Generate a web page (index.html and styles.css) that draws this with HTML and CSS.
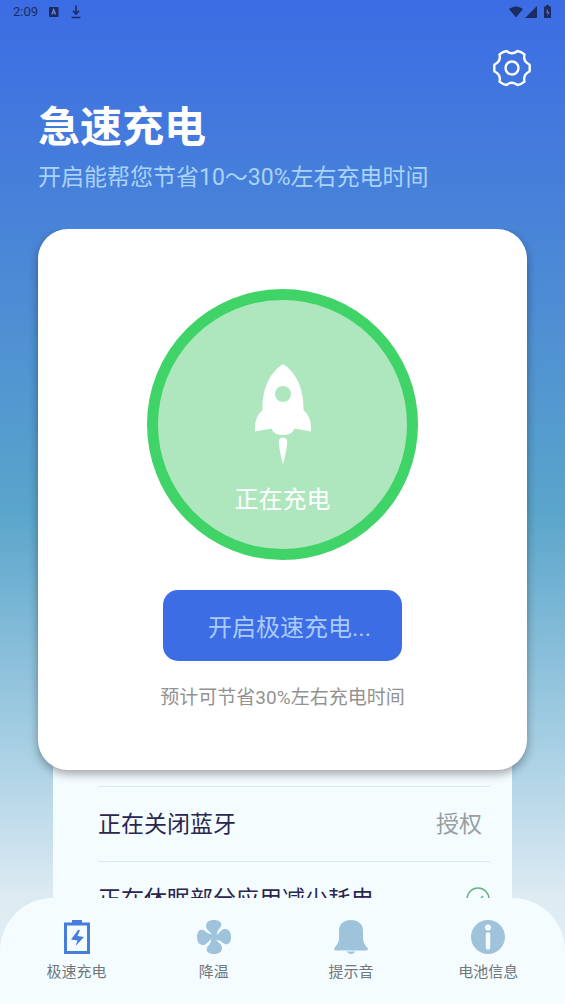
FILE: index.html
```
<!DOCTYPE html>
<html lang="zh-CN">
<head>
<meta charset="utf-8">
<meta name="viewport" content="width=device-width, initial-scale=1">
<title>急速充电</title>
<link rel="stylesheet" href="styles.css">
</head>
<body>
<div class="app">
  <div class="status">
    <div class="status-group">
      <span class="clock">2:09</span>
      <svg class="status-icon" viewBox="0 0 12 14" aria-hidden="true"><rect x="1" y="2" width="9.500" height="10" rx="1" fill="#1b2c62"/><path d="M3.800 9.500 5.700 4.500 7.600 9.500M4.500 8h2.400" fill="none" stroke="#6d88dc" stroke-width="1.200"/></svg>
      <svg class="status-icon" viewBox="0 0 12 14" aria-hidden="true"><path d="M6 .500v8M3 5.800 6 9l3-3.200M1.500 12.500h9" fill="none" stroke="#1b2c62" stroke-width="1.600"/></svg>
    </div>
    <svg class="status-signals" viewBox="0 0 44 14" aria-hidden="true" fill="#1b2c62">
      <path d="M0 4C4.500.500 9.500.500 14 4L7 12.500z"/>
      <path d="M28 1v12H16z"/>
      <path d="M37 1.500V0h3v1.500h2V13h-7V1.500z"/>
      <path d="m39 3.500-2 4h1.500V11l2-4H39z" fill="#5d7bd0"/>
    </svg>
  </div>

  <header class="header">
    <button class="settings" type="button" aria-label="设置">
      <svg viewBox="-19 -19 38 38" fill="none" stroke="#fff" stroke-width="2.400" stroke-linejoin="round" aria-hidden="true">
        <path d="M17.500 3.500C13 5.500 11.300 8.500 12.500 13.600Q9 16.500 5.500 17C1.700 13.800 -1.700 13.800 -5.500 17Q-9 16.500 -12.500 13.600C-11.300 8.500 -13 5.500 -17.500 3.500Q-18 0 -17.500 -3.500C-13 -5.500 -11.300 -8.500 -12.500 -13.600Q-9 -16.500 -5.500 -17C-1.700 -13.800 1.700 -13.800 5.500 -17Q9 -16.500 12.500 -13.600C11.300 -8.500 13 -5.500 17.500 -3.500Q18 0 17.500 3.500Z"/>
        <circle r="6.500"/>
      </svg>
    </button>
    <h1 class="title">急速充电</h1>
    <p class="subtitle">开启能帮您节省10～30%左右充电时间</p>
  </header>

  <main class="content">
    <section class="card">
      <div class="dial">
        <svg class="rocket" viewBox="0 0 58 102" fill="#fff" aria-hidden="true">
          <path fill-rule="evenodd" d="M29 1C18 8 8 23 8.500 47 3 52 .500 58 1 68.500L17.500 65.500C19 70 23 72 29 72S39 70 40.500 65.500L57 68.500C57.500 58 55 52 49.500 47 50 23 40 8 29 1zM29 23a8 8 0 1 1 0 16 8 8 0 0 1 0-16z"/>
          <path d="M29 74.500c3 0 4.500 2 4.200 5C32.500 87 31 94 29 101.500 27 94 25.500 87 24.800 79.500c-.300-3 1.200-5 4.200-5z"/>
        </svg>
        <span class="dial-label">正在充电</span>
      </div>
      <button class="start" type="button">开启极速充电...</button>
      <p class="hint">预计可节省30%左右充电时间</p>
    </section>

    <ul class="tasks">
      <li class="task"><span class="task-name">正在关闭蓝牙</span><button class="grant" type="button">授权</button></li>
      <li class="task"><span class="task-name">正在休眠部分应用减少耗电</span>
        <svg class="done" viewBox="0 0 24 24" fill="none" stroke="#67b07c" stroke-width="1.600" aria-hidden="true"><circle cx="12" cy="12" r="11"/><path d="m7 12 4 4 6-7"/></svg>
      </li>
    </ul>
  </main>

  <nav class="tabs">
    <a class="tab" href="#charge" aria-current="page">
      <svg class="tab-icon" viewBox="0 0 36 36" aria-hidden="true"><path d="M6.500 5h23v28.500h-23z" fill="none" stroke="#477ddb" stroke-width="3"/><path d="M13 1h10v4H13z" fill="#477ddb"/><path d="M19 11 12 20.500l6.500 1-2 5.500L25 18l-6.500-1L21 11z" fill="#477ddb"/></svg>
      <span>极速充电</span>
    </a>
    <a class="tab" href="#cool">
      <svg class="tab-icon" viewBox="-18 -18 36 36" fill="#9fc3db" aria-hidden="true">
        <path id="blade" d="M-1 1C-1 -5 -8 -6 -8 -11 -8 -15.500 -4 -17 0 -17 5 -17 8.500 -14.500 7 -11 6 -8 3 -7 3 -3L1 1z"/>
        <use href="#blade" transform="rotate(90)"/><use href="#blade" transform="rotate(180)"/><use href="#blade" transform="rotate(270)"/>
      </svg>
      <span>降温</span>
    </a>
    <a class="tab" href="#sound">
      <svg class="tab-icon" viewBox="0 0 36 36" fill="#9fc3db" aria-hidden="true"><path d="M18 1C10.500 1 6 5 6 12v7C6 24 3.500 26 1.500 29c-1 1.500 0 2.500 1.500 2.500h30c1.500 0 2.500-1 1.500-2.500C32.500 26 30 24 30 19v-7C30 5 25.500 1 18 1z"/><path d="M13.500 32.500h9C21 34 20 35 18 35s-3-1-4.500-2.500z"/></svg>
      <span>提示音</span>
    </a>
    <a class="tab" href="#battery">
      <svg class="tab-icon" viewBox="0 0 36 36" aria-hidden="true"><circle cx="18" cy="18" r="17" fill="#9fc3db"/><circle cx="18" cy="8.500" r="3" fill="#f4fcff"/><path d="M18 15.500v13" stroke="#f4fcff" stroke-width="4.500" stroke-linecap="round"/></svg>
      <span>电池信息</span>
    </a>
  </nav>
</div>
</body>
</html>
```
FILE: styles.css
```
* {
  box-sizing: border-box;
}

body {
  margin: 0;
  font-family: Roboto, "Noto Sans CJK SC", sans-serif;
}

h1,
p,
ul {
  margin: 0;
  padding: 0;
}

button {
  border: 0;
  padding: 0;
  background: none;
  font: inherit;
  cursor: pointer;
}

.app {
  display: flex;
  flex-direction: column;
  height: 100vh;
  overflow: hidden;
  background: linear-gradient(#3c6ce4 0%, #4781d9 20%, #5aa5cb 51%, #b0d4e6 77%, #dceaf2 89%, #e6f1f7 100%);
}

.status {
  display: flex;
  align-items: center;
  justify-content: space-between;
  height: 23px;
  padding: 0 12px 0 13px;
  color: #1b2c62;
  font-size: 13px;
}

.status-group {
  display: flex;
  align-items: center;
  gap: 10px;
}

.status-icon {
  width: 12px;
  height: 14px;
}

.status-signals {
  width: 44px;
  height: 14px;
}

.header {
  display: flex;
  flex-direction: column;
  padding: 26px 34px 35px 38px;
}

.settings {
  align-self: flex-end;
  width: 38px;
  height: 38px;
}

.settings svg {
  display: block;
}

.title {
  margin-top: 16px;
  color: #fff;
  font-size: 42px;
  font-weight: 700;
  line-height: 50px;
}

.subtitle {
  margin-top: 9px;
  color: #a9d3f8;
  font-size: 23px;
  line-height: 32px;
}

.content {
  flex: 1;
  min-height: 0;
  overflow: hidden;
}

.card {
  position: relative;
  z-index: 1;
  display: flex;
  flex-direction: column;
  align-items: center;
  margin: 0 38px;
  padding: 60px 20px 58px;
  border-radius: 30px;
  background: #fff;
  box-shadow: 0 4px 10px rgba(0, 0, 0, 0.35);
}

.dial {
  display: flex;
  flex-direction: column;
  align-items: center;
  width: 271px;
  height: 271px;
  padding-top: 63px;
  border: 11px solid #40d468;
  border-radius: 50%;
  background: #aee7be;
}

.rocket {
  width: 58px;
  height: 102px;
}

.dial-label {
  margin-top: 18px;
  color: #fff;
  font-size: 24px;
  line-height: 34px;
}

.start {
  min-width: 239px;
  height: 71px;
  margin-top: 30px;
  padding-left: 14px;
  border-radius: 15px;
  background: #3c6de5;
  color: #a9cbfa;
  font-size: 24px;
}

.hint {
  margin-top: 23px;
  color: #929292;
  font-size: 19px;
  line-height: 28px;
}

.tasks {
  margin: -40px 53px 0;
  padding: 56px 22px 40px 45px;
  background: #f4fcff;
  list-style: none;
}

.task {
  display: flex;
  align-items: center;
  justify-content: space-between;
  height: 75px;
  border-top: 1px solid #dbe9ee;
  color: #29264f;
  font-size: 23px;
}

.task-name,
.grant {
  padding-bottom: 5px;
}

.grant {
  padding-right: 8px;
  color: #999fa3;
}

.done {
  width: 24px;
  height: 24px;
}

.tabs {
  display: flex;
  justify-content: space-between;
  height: 106px;
  padding: 21px 8px 0;
  border-radius: 53px 53px 0 0;
  background: #f4fcff;
}

.tab {
  display: flex;
  flex: 1;
  flex-direction: column;
  align-items: center;
  gap: 6px;
  color: #70787b;
  font-size: 15px;
  line-height: 22px;
  text-decoration: none;
}

.tab-icon {
  width: 36px;
  height: 36px;
}
```
